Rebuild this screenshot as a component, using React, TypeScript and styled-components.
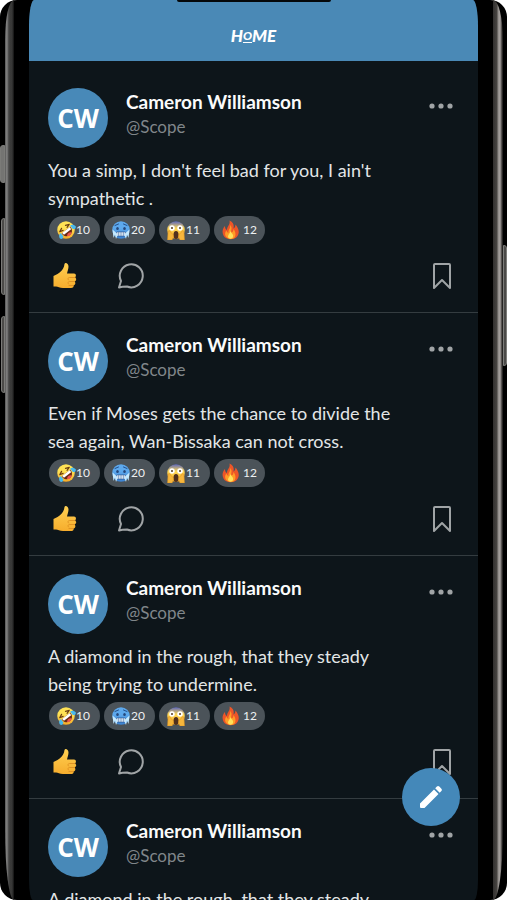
import React, { useId } from "react";
import styled, { createGlobalStyle } from "styled-components";

const GlobalStyle = createGlobalStyle`
  *, *::before, *::after { box-sizing: border-box; }
  body { margin: 0; background: #fff; font-family: Lato, "Noto Sans", sans-serif; }
  button { margin: 0; padding: 0; border: 0; background: none; color: inherit; font: inherit; cursor: pointer; }
  h1, h2, p { margin: 0; }
`;

const Device = styled.div`
  display: grid;
  grid-template-columns: 5px 9px 15px minmax(0, 1fr) 15px 10px 4px;
  height: 100vh;
  overflow: hidden;
  border-radius: 17px;
  background: #000;
`;

const KeyColumn = styled.div`
  display: flex;
  flex-direction: column;
`;

const Key = styled.div<{ $gap: number; $length: number; $side: "left" | "right"; $thin?: boolean }>`
  flex: none;
  width: ${(p) => (p.$thin ? 4 : 5)}px;
  height: ${(p) => p.$length}px;
  margin-top: ${(p) => p.$gap}px;
  align-self: flex-end;
  border: 1px solid #7b7b78;
  border-radius: ${(p) => (p.$side === "left" ? "3px 0 0 3px" : "0 3px 3px 0")};
  background: ${(p) => (p.$thin ? "#4b4a48" : "#747472")};
`;

const Rail = styled.div<{ $side: "left" | "right" }>`
  background: ${(p) =>
    p.$side === "left"
      ? "linear-gradient(90deg, #555 0, #8a8a89 2px, #555 3px, #3a3a39 5px, #383837 7px, #111 9px)"
      : "linear-gradient(90deg, #32302f 0, #474441 4px, #8d8986 5px, #aaa5a2 7px, #3b3836 9px, #111 10px)"};
  border-radius: ${(p) => (p.$side === "left" ? "9px 0 0 9px / 40px 0 0 70px" : "0 10px 10px 0 / 0 40px 70px 0")};
`;

const Screen = styled.main`
  grid-column: 4;
  position: relative;
  display: flex;
  flex-direction: column;
  min-height: 0;
  overflow: hidden;
  border-radius: 5px 5px 4px 4px / 26px 26px 20px 20px;
  background: #0d151a;
`;

const Header = styled.header`
  flex: none;
  display: flex;
  flex-direction: column;
  align-items: center;
  height: 61px;
  background: #4a89b6;
`;

const Notch = styled.div`
  width: 154px;
  height: 2px;
  border-radius: 0 0 8px 8px;
  background: #05080a;
`;

const Title = styled.h1`
  display: flex;
  align-items: center;
  margin-top: 24px;
  color: #fff;
  font-size: 17px;
  font-style: italic;
  font-weight: 900;
  line-height: 20px;
`;

const TitleSmall = styled.span`
  font-size: 12px;
  line-height: 12px;
  text-decoration: underline;
  text-underline-offset: 2px;
`;

const Feed = styled.div`
  flex: 1;
  min-height: 0;
  overflow: hidden;
  padding-top: 9px;
`;

const PostCard = styled.article`
  padding: 18px 25px 22px 19px;
  border-bottom: 1px solid #343c40;
`;

const PostHeader = styled.div`
  display: flex;
  align-items: flex-start;
  gap: 18px;
`;

const Avatar = styled.div`
  flex: none;
  display: grid;
  place-items: center;
  width: 60px;
  height: 60px;
  border-radius: 50%;
  background: #4889b8;
  color: #fff;
  font: 700 26px "Open Sans", "Noto Sans", sans-serif;
`;

const Author = styled.div`
  flex: 1;
  padding-top: 1px;
`;

const Name = styled.h2`
  color: #fafbfb;
  font-size: 19px;
  font-weight: 700;
  line-height: 25px;
`;

const Handle = styled.p`
  color: #80868a;
  font-size: 17px;
  line-height: 25px;
`;

const IconButton = styled.button`
  display: flex;
  color: #a0a4a6;
`;

const MoreButton = styled(IconButton)`
  margin-top: 12px;
`;

const Body = styled.p`
  max-width: 352px;
  margin-top: 8px;
  color: #e3e6e7;
  font-size: 18px;
  line-height: 28px;
`;

const Reactions = styled.div`
  display: flex;
  gap: 4px;
  margin-top: 4px;
  padding-left: 1px;
`;

const Chip = styled.button<{ $spaced?: boolean }>`
  display: flex;
  align-items: center;
  gap: ${(p) => (p.$spaced ? 2 : 0)}px;
  width: 51px;
  height: 28px;
  padding-left: 7px;
  border-radius: 14px;
  background: #4b5359;
  color: #edf0f1;
  font-size: 12px;
  line-height: 16px;
`;

const Actions = styled.div`
  display: flex;
  align-items: center;
  height: 28px;
  margin-top: 18px;
  padding-left: 4px;
`;

const CommentButton = styled(IconButton)`
  margin-left: 40px;
`;

const SaveButton = styled(IconButton)`
  margin-left: auto;
`;

const ComposeButton = styled.button`
  position: absolute;
  right: 18px;
  bottom: 74px;
  display: grid;
  place-items: center;
  width: 58px;
  height: 58px;
  border-radius: 50%;
  background: #4488b9;
  color: #fff;
`;

const Face = ({ children, top = "#ffe255", bottom = "#f5a926", clip }: {
  children: React.ReactNode; top?: string; bottom?: string; clip?: string;
}) => {
  const id = useId();
  return (
    <svg width="20" height="20" viewBox="0 0 40 40" aria-hidden="true">
      <defs>
        <linearGradient id={id} x1="0" y1="0" x2="0" y2="1">
          <stop offset="0" stopColor={clip ?? top} />
          <stop offset=".4" stopColor={top} />
          <stop offset="1" stopColor={bottom} />
        </linearGradient>
      </defs>
      <circle cx="20" cy="20" r="17.5" fill={`url(#${id})`} />
      {children}
    </svg>
  );
};

const Laughing = () => (
  <Face>
    <g transform="rotate(-38 20 20)">
      <path d="M8 15l7-3M8 15l7 2M32 15l-7-3M32 15l-7 2" stroke="#6b3e12" strokeWidth="2.4" fill="none" strokeLinecap="round" />
      <path d="M9 20h22c0 8-5 13-11 13S9 28 9 20z" fill="#6a2914" />
      <path d="M10 20h20l-1 5H11z" fill="#fff" />
      <path d="M14 31c3-4 9-4 12 0-4 3-8 3-12 0z" fill="#ef5450" />
      <path d="M8 18c-5 0-8 4-8 8 1 4 7 4 8 0z" fill="#49b9ee" />
      <path d="M32 18c5 0 8 4 8 8-1 4-7 4-8 0z" fill="#49b9ee" />
    </g>
  </Face>
);

const Freezing = () => (
  <Face top="#5da9ed" bottom="#3b82d1">
    <path d="M8 11l7-3M32 11l-7-3" stroke="#244f8b" strokeWidth="2" strokeLinecap="round" />
    <ellipse cx="13" cy="17" rx="2.6" ry="3.2" fill="#25487c" />
    <ellipse cx="27" cy="17" rx="2.6" ry="3.2" fill="#25487c" />
    <rect x="10" y="24" width="20" height="8" rx="3" fill="#fff" stroke="#244f8b" strokeWidth="1.5" />
    <path d="M10 28h20M15 24v8M20 24v8M25 24v8" stroke="#4678b1" />
    <path d="M3 19l2 17 3-7 2 9 3-7-2-5zM37 19l-2 17-3-7-2 9-3-7 2-5z" fill="#c5eaff" />
  </Face>
);

const Screaming = () => (
  <Face clip="#5965bd" top="#ffd958">
    <circle cx="12" cy="16" r="5.5" fill="#fff" />
    <circle cx="28" cy="16" r="5.5" fill="#fff" />
    <circle cx="12" cy="16" r="2" fill="#563b22" />
    <circle cx="28" cy="16" r="2" fill="#563b22" />
    <ellipse cx="20" cy="30" rx="5" ry="8" fill="#51301d" />
    <path d="M3 40l1-16c0-4 5-3 5 0l5 5c2 3 0 8-2 11zM37 40l-1-16c0-4-5-3-5 0l-5 5c-2 3 0 8 2 11z" fill="#f6b63c" stroke="#d58c20" />
  </Face>
);

const Fire = () => (
  <svg width="20" height="20" viewBox="0 0 40 40" aria-hidden="true">
    <path d="M17 1c9 4 9 11 8 16 3-2 4-5 4-8 6 7 9 16 4 23-6 9-23 9-28-1C1 23 4 16 8 12c0 4 1 7 4 8 0-8 7-10 5-19z" fill="#ed5528" />
    <path d="M18 10c6 6 1 10 3 15 3-1 4-4 4-7 6 7 6 20-5 20S5 27 11 21c1 3 2 4 4 5-1-7 5-9 3-16z" fill="#ff9c26" />
    <path d="M19 22c1 5 7 6 5 12-2 5-10 4-10-1 0-4 4-6 5-11z" fill="#ffe15a" />
  </svg>
);

const Thumb = () => {
  const id = useId();
  return (
    <svg width="26" height="28" viewBox="0 0 52 56" aria-hidden="true">
      <defs>
        <linearGradient id={id} x1="0" y1="0" x2="0" y2="1">
          <stop offset="0" stopColor="#ffd052" />
          <stop offset="1" stopColor="#f6ad2d" />
        </linearGradient>
      </defs>
      <path d="M3 28l8-4c6-3 11-9 13-15l1-5c1-4 8-2 8 5 0 5-2 9-3 14h14c5 0 5 7 1 8 5 1 4 7 0 8 3 2 2 7-2 8 1 3-1 5-5 5H22c-7 0-10-3-14-3H3z" fill={`url(#${id})`} />
      <path d="M46 31H35c-3 0-4 3-2 5M45 39H35c-3 0-4 3-2 5M42 47h-8" fill="none" stroke="#dc8e21" strokeWidth="1.8" strokeLinecap="round" />
    </svg>
  );
};

const Comment = () => (
  <svg width="26" height="26" viewBox="0 0 26 26" aria-hidden="true">
    <path d="M1 24.500L3 18A11.500 11.500 0 1 1 9 23.500Q4 23.500 1 24.500z" fill="none" stroke="currentColor" strokeWidth="2" strokeLinejoin="round" />
  </svg>
);

const Bookmark = () => (
  <svg width="22" height="28" viewBox="0 0 22 28" aria-hidden="true">
    <path d="M4 2h14q1 0 1 1v23l-8-8-8 8V3q0-1 1-1z" fill="none" stroke="currentColor" strokeWidth="2" strokeLinejoin="round" />
  </svg>
);

const More = () => (
  <svg width="24" height="12" viewBox="0 0 24 12" aria-hidden="true" fill="currentColor">
    <circle cx="3" cy="6" r="2.6" />
    <circle cx="12" cy="6" r="2.6" />
    <circle cx="21" cy="6" r="2.6" />
  </svg>
);

const Pencil = () => (
  <svg width="26" height="26" viewBox="0 0 26 26" aria-hidden="true" fill="currentColor">
    <path d="M2 19.5L16 5.5l4.500 4.500-14 14H3q-1 0-1-1zM17.200 4.300l1.700-1.700q1.200-1.200 2.400 0l2.100 2.100q1.200 1.200 0 2.400l-1.700 1.700z" />
  </svg>
);

const reactions = [
  { label: "Laughing", count: 10, Icon: Laughing },
  { label: "Freezing", count: 20, Icon: Freezing },
  { label: "Screaming", count: 11, Icon: Screaming },
  { label: "Fire", count: 12, Icon: Fire, spaced: true },
];

const Post = ({ text }: { text: string }) => (
  <PostCard>
    <PostHeader>
      <Avatar>CW</Avatar>
      <Author>
        <Name>Cameron Williamson</Name>
        <Handle>@Scope</Handle>
      </Author>
      <MoreButton aria-label="More options"><More /></MoreButton>
    </PostHeader>
    <Body>{text}</Body>
    <Reactions>
      {reactions.map(({ label, count, Icon, spaced }) => (
        <Chip key={label} aria-label={`${label} ${count}`} $spaced={spaced}>
          <Icon />
          {count}
        </Chip>
      ))}
    </Reactions>
    <Actions>
      <IconButton aria-label="Like"><Thumb /></IconButton>
      <CommentButton aria-label="Comment"><Comment /></CommentButton>
      <SaveButton aria-label="Save"><Bookmark /></SaveButton>
    </Actions>
  </PostCard>
);

const posts = [
  "You a simp, I don't feel bad for you, I ain't sympathetic .",
  "Even if Moses gets the chance to divide the sea again, Wan-Bissaka can not cross.",
  "A diamond in the rough, that they steady being trying to undermine.",
  "A diamond in the rough, that they steady being trying to undermine.",
];

export default function App() {
  return (
    <>
      <GlobalStyle />
      <Device>
        <KeyColumn>
          <Key $side="left" $gap={145} $length={38} />
          <Key $side="left" $gap={35} $length={77} $thin />
          <Key $side="left" $gap={21} $length={77} $thin />
        </KeyColumn>
        <Rail $side="left" />
        <Screen>
          <Header>
            <Notch />
            <Title>H<TitleSmall>O</TitleSmall>ME</Title>
          </Header>
          <Feed>
            {posts.map((text, index) => <Post key={index} text={text} />)}
          </Feed>
          <ComposeButton aria-label="Write a post"><Pencil /></ComposeButton>
        </Screen>
        <div />
        <Rail $side="right" />
        <KeyColumn>
          <Key $side="right" $gap={245} $length={121} $thin />
        </KeyColumn>
      </Device>
    </>
  );
}
